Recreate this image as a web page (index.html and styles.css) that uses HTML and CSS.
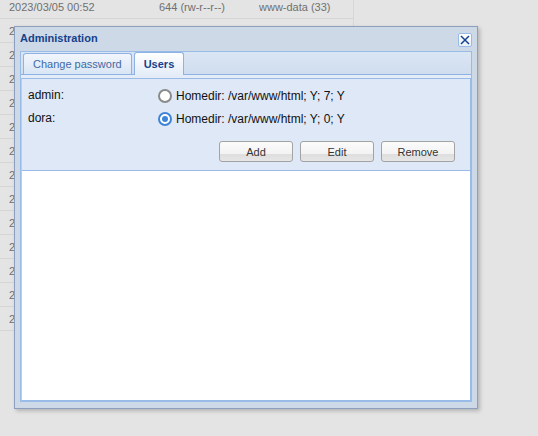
FILE: index.html
```html
<!DOCTYPE html>
<html>
<head>
<meta charset="utf-8">
<link rel="stylesheet" href="styles.css">
</head>
<body>
<div class="grid">
  <div class="row"><span class="c1">2023/03/05 00:52</span><span class="c2">644 (rw-r--r--)</span><span class="c3">www-data (33)</span></div>
  <div class="row"><span class="c1">2023/03/16 08:13</span><span class="c2">644 (rw-r--r--)</span><span class="c3">www-data (33)</span></div>
  <div class="row"><span class="c1">2023/03/16 08:13</span></div>
  <div class="row"><span class="c1">2023/03/16 08:13</span></div>
  <div class="row"><span class="c1">2023/03/16 08:13</span></div>
  <div class="row"><span class="c1">2023/03/16 08:13</span></div>
  <div class="row"><span class="c1">2023/03/16 08:13</span></div>
  <div class="row"><span class="c1">2023/03/16 08:13</span></div>
  <div class="row"><span class="c1">2023/03/16 08:13</span></div>
  <div class="row"><span class="c1">2023/03/16 08:13</span></div>
  <div class="row"><span class="c1">2023/03/16 08:13</span></div>
  <div class="row"><span class="c1">2023/03/16 08:13</span></div>
  <div class="row"><span class="c1">2023/03/16 08:13</span></div>
  <div class="row"><span class="c1">2023/03/16 08:13</span></div>
</div>

<div class="win">
  <div class="win-head">
    <span class="title">Administration</span>
    <span class="close">
      <svg width="10" height="10" viewBox="0 0 10 10"><path d="M1 1L9 9M9 1L1 9" stroke="#15428b" stroke-width="1.5" fill="none"/></svg>
    </span>
  </div>
  <div class="tabpanel">
    <div class="tabstrip">
      <div class="tab">Change password</div>
      <div class="tab active">Users</div>
    </div>
    <div class="strip-gap"></div>
    <div class="tabbody">
      <div class="form">
        <div class="rows">
          <div class="lbl">admin:</div>
          <div class="opt"><span class="radio"></span>Homedir: /var/www/html; Y; 7; Y</div>
          <div class="lbl">dora:</div>
          <div class="opt"><span class="radio on"></span>Homedir: /var/www/html; Y; 0; Y</div>
        </div>
        <div class="btns">
          <span class="btn">Add</span>
          <span class="btn">Edit</span>
          <span class="btn">Remove</span>
        </div>
      </div>
    </div>
  </div>
</div>
</body>
</html>
```

FILE: styles.css
```css
html, body {
  margin: 0;
  padding: 0;
}
body {
  background: #e4e4e4;
  font-family: "Liberation Sans", Arial, sans-serif;
  width: 538px;
  height: 436px;
  overflow: hidden;
  position: relative;
}

.grid {
  width: 353px;
  border-right: 1px solid #d6d6d6;
  margin-top: -5px;
}
.row {
  height: 23px;
  border-bottom: 1px solid #d6d6d6;
  display: flex;
  align-items: center;
  font-size: 11px;
  color: #707070;
  white-space: nowrap;
}
.c1 { width: 159px; padding-left: 9px; box-sizing: border-box; flex: none; }
.c2 { width: 100px; flex: none; }
.c3 { flex: 1; }

.win {
  position: absolute;
  left: 14px;
  top: 26px;
  width: 464px;
  height: 383px;
  box-sizing: border-box;
  border: 1px solid #8d9fbe;
  background: #ced9e7;
  padding: 0 5px 6px 5px;
  box-shadow: 2px 2px 4px rgba(0,0,0,0.22);
  display: flex;
  flex-direction: column;
}
.win-head {
  height: 24px;
  display: flex;
  align-items: center;
  justify-content: space-between;
  padding-bottom: 3px;
  box-sizing: border-box;
}
.title {
  font-size: 11px;
  font-weight: bold;
  color: #15428b;
}
.close {
  width: 14px;
  height: 14px;
  box-sizing: border-box;
  border: 1px solid #99bbe8;
  border-radius: 2px;
  background: linear-gradient(#ffffff, #e8eff9);
  display: flex;
  align-items: center;
  justify-content: center;
  margin-top: 5px;
}

.tabpanel {
  flex: 1;
  border: 1px solid #99bbe8;
  display: flex;
  flex-direction: column;
  background: #dfe8f6;
}
.tabstrip {
  height: 22px;
  border-bottom: 1px solid #8db2e3;
  background: linear-gradient(#dbe6f4, #cfddef);
  display: flex;
  align-items: flex-end;
  gap: 2px;
  padding-left: 2px;
}
.tab {
  height: 20px;
  padding: 0 9px;
  border: 1px solid #8db2e3;
  border-bottom: none;
  border-radius: 3px 3px 0 0;
  background: linear-gradient(#f2f6fc, #d9e5f5);
  font-size: 11px;
  color: #416aa3;
  display: flex;
  align-items: center;
}
.tab.active {
  height: 22px;
  margin-bottom: -1px;
  background: linear-gradient(#ffffff, #e4edf9);
  font-weight: bold;
  color: #15428b;
}
.strip-gap {
  height: 3px;
  background: #e4ecf8;
}
.tabbody {
  flex: 1;
  background: #ffffff;
  border: 1px solid #99bbe8;
  border-left-color: #b8cdea;
}
.form {
  background: #dfe8f6;
  border-bottom: 1px solid #99bbe8;
  padding: 5px 15px 8px 6px;
}
.rows {
  display: grid;
  grid-template-columns: 130px auto;
  grid-auto-rows: 23px;
  align-items: center;
  font-size: 12px;
  color: #111;
}
.lbl {
  margin-top: -2px;
}
.opt {
  display: flex;
  align-items: center;
  gap: 4px;
}
.radio {
  width: 14px;
  height: 14px;
  box-sizing: border-box;
  border: 2px solid #8a8a8a;
  border-radius: 50%;
  background: #fff;
  position: relative;
}
.radio.on {
  border-color: #3d84d9;
}
.radio.on::after {
  content: "";
  position: absolute;
  left: 2px;
  top: 2px;
  width: 6px;
  height: 6px;
  border-radius: 50%;
  background: #3d84d9;
}
.btns {
  display: flex;
  justify-content: flex-end;
  gap: 7px;
  margin-top: 11px;
}
.btn {
  width: 74px;
  height: 21px;
  box-sizing: border-box;
  border: 1px solid #a3a3a3;
  border-radius: 3px;
  background: linear-gradient(#fbfbfb 0%, #f3f3f3 62%, #dedede 64%, #e6e6e6 100%);
  font-size: 11px;
  color: #333;
  display: flex;
  align-items: center;
  justify-content: center;
}
```
